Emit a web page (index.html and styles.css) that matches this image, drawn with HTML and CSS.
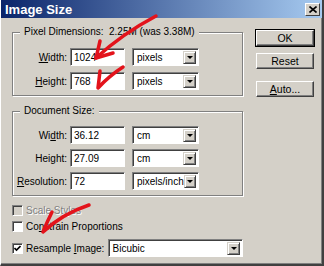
FILE: index.html
```html
<!DOCTYPE html>
<html lang="en">
  <head>
    <meta charset="UTF-8" />
    <title>Image Size</title>
    <link rel="stylesheet" href="styles.css">
  </head>
  <body>
    <div class="window">
      <div class="titlebar">
        <span class="title">Image Size</span>
        <span class="close">
          <svg width="8" height="7" viewBox="0 0 8 7">
            <path d="M0.5 0.5 L7.5 6.5 M7.5 0.5 L0.5 6.5" stroke="#000" stroke-width="1.6" />
          </svg>
        </span>
      </div>

      <div class="main">
        <div class="left-col">
          <fieldset class="group group-pixels">
            <legend>Pixel Dimensions:&nbsp; 2.25M (was 3.38M)</legend>
            <div class="row">
              <label class="lbl"><u>W</u>idth:</label>
              <div class="field">1024</div>
              <div class="select"><span>pixels</span><i class="drop"></i></div>
            </div>
            <div class="row">
              <label class="lbl"><u>H</u>eight:</label>
              <div class="field">768</div>
              <div class="select"><span>pixels</span><i class="drop"></i></div>
            </div>
          </fieldset>

          <fieldset class="group group-doc">
            <legend>Document Size:</legend>
            <div class="row">
              <label class="lbl">Wi<u>d</u>th:</label>
              <div class="field">36.12</div>
              <div class="select"><span>cm</span><i class="drop"></i></div>
            </div>
            <div class="row">
              <label class="lbl">Hei<u>g</u>ht:</label>
              <div class="field">27.09</div>
              <div class="select"><span>cm</span><i class="drop"></i></div>
            </div>
            <div class="row">
              <label class="lbl"><u>R</u>esolution:</label>
              <div class="field">72</div>
              <div class="select"><span>pixels/inch</span><i class="drop"></i></div>
            </div>
          </fieldset>

          <div class="checks">
            <div class="check disabled"><span class="box"></span><span>Scale St<u>y</u>les</span></div>
            <div class="check"><span class="box"></span><span>Co<u>n</u>strain Proportions</span></div>
            <div class="check check-resample">
              <span class="box checked">
                <svg width="7" height="7" viewBox="0 0 7 7">
                  <path d="M0.5 3 L2.5 5 L6.5 1" stroke="#000" stroke-width="1.6" fill="none" />
                </svg>
              </span>
              <span class="resample-lbl">Resample <u>I</u>mage:</span>
              <div class="select select-wide"><span>Bicubic</span><i class="drop"></i></div>
            </div>
          </div>
        </div>

        <div class="buttons">
          <button class="btn btn-default">OK</button>
          <button class="btn">Reset</button>
          <button class="btn btn-auto"><u>A</u>uto...</button>
        </div>
      </div>

      <svg class="marks" width="324" height="266" viewBox="0 0 324 266">
        <g stroke="#e3131b" stroke-width="3.5" fill="none" stroke-linecap="round" stroke-linejoin="round">
          <path d="M100 41 Q98 50 96 58 Q122 34 156 16" />
          <path d="M96 58 L113 53" />
          <path d="M100 71 Q99 80 98 88 Q109 76 123 67" />
          <path d="M52 212 Q47 222 43 232 Q62 214 89 205" />
        </g>
      </svg>
    </div>
  </body>
</html>
```

FILE: styles.css
```css
* {
  box-sizing: border-box;
}

body {
  margin: 0;
  font-family: "Liberation Sans", Arial, sans-serif;
  font-size: 10px;
  color: #000;
}

.window {
  position: relative;
  width: 324px;
  height: 266px;
  background-color: #d4d0c8;
  border-left: 1px solid #fff;
  border-right: 2px solid #404040;
  border-bottom: 2px solid #404040;
  box-shadow: inset -1px -1px 0 #808080;
  overflow: hidden;
}

.titlebar {
  height: 18px;
  display: flex;
  align-items: center;
  justify-content: space-between;
  padding: 0 2px 0 4px;
  background: linear-gradient(to right, #0a246a, #a6caf0);
  color: white;
}

.title {
  font-weight: bold;
  font-size: 13px;
}

.close {
  width: 15px;
  height: 13px;
  display: flex;
  align-items: center;
  justify-content: center;
  background-color: #d4d0c8;
  border: 1px solid;
  border-color: #fff #404040 #404040 #fff;
}

.main {
  display: flex;
  padding-left: 11px;
}

.left-col {
  width: 231px;
  display: flex;
  flex-direction: column;
}

.group {
  margin: 0;
  padding: 0;
  min-width: 0;
  border: 1px solid #808080;
  box-shadow: inset 1px 1px 0 #fff, 1px 1px 0 #fff;
}

.group legend {
  margin-left: 7px;
  padding: 0 4px;
  line-height: 12px;
  background-color: #d4d0c8;
}

.group-pixels {
  margin-top: 8px;
  padding-top: 10px;
  padding-bottom: 5px;
}

.group-doc {
  margin-top: 9px;
  padding-top: 9px;
  padding-bottom: 5px;
}

.row {
  display: flex;
  align-items: center;
  height: 18px;
  margin-bottom: 6px;
}

.group-doc .row {
  margin-bottom: 5px;
}

.row:last-child,
.group-doc .row:last-child {
  margin-bottom: 0;
}

.lbl {
  width: 54px;
  text-align: right;
  margin-right: 3px;
}

.field {
  width: 55px;
  height: 18px;
  padding: 3px 0 0 3px;
  background-color: #fff;
  border: 1px solid;
  border-color: #808080 #fff #fff #808080;
  box-shadow: inset 1px 1px 0 #404040;
  margin-right: 7px;
}

.select {
  width: 67px;
  height: 18px;
  display: flex;
  align-items: center;
  justify-content: space-between;
  padding: 0 2px 0 4px;
  background-color: #fff;
  border: 1px solid;
  border-color: #808080 #fff #fff #808080;
  box-shadow: inset 1px 1px 0 #404040;
}

.drop {
  width: 13px;
  height: 13px;
  margin-top: 1px;
  display: flex;
  align-items: center;
  justify-content: center;
  background-color: #d4d0c8;
  border: 1px solid;
  border-color: #d4d0c8 #404040 #404040 #d4d0c8;
  box-shadow: inset 1px 1px 0 #fff, inset -1px -1px 0 #808080;
}

.drop::after {
  content: "";
  border-left: 3px solid transparent;
  border-right: 3px solid transparent;
  border-top: 3px solid #000;
}

.checks {
  display: flex;
  flex-direction: column;
  padding-top: 8px;
}

.check {
  display: flex;
  align-items: center;
  height: 13px;
  margin-bottom: 3px;
}

.check .box {
  width: 11px;
  height: 11px;
  margin-right: 3px;
  display: flex;
  align-items: center;
  justify-content: center;
  background-color: #fff;
  border: 1px solid;
  border-color: #808080 #fff #fff #808080;
  box-shadow: inset 1px 1px 0 #404040;
}

.check.disabled {
  color: #808080;
  text-shadow: 1px 1px 0 #fff;
}

.check.disabled .box {
  background-color: #d4d0c8;
}

.check-resample {
  height: 18px;
  margin-top: 3px;
}

.resample-lbl {
  width: 82px;
}

.select-wide {
  width: 136px;
}

.buttons {
  display: flex;
  flex-direction: column;
  padding: 12px 0 0 13px;
}

.btn {
  width: 58px;
  height: 16px;
  padding: 0;
  font-family: inherit;
  font-size: 10.5px;
  color: #000;
  background-color: #d4d0c8;
  border: 1px solid;
  border-color: #fff #404040 #404040 #fff;
  box-shadow: inset -1px -1px 0 #808080;
  margin-bottom: 7px;
}

.btn-default {
  outline: 1px solid #000;
}

.btn-auto {
  margin-top: 5px;
}

.marks {
  position: absolute;
  left: -1px;
  top: 0;
  pointer-events: none;
}
```
